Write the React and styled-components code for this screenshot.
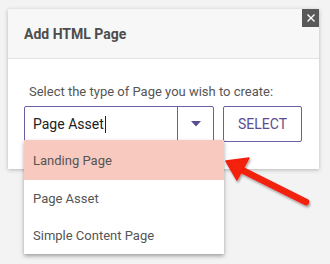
import React from "react";
import styled, { createGlobalStyle } from "styled-components";

const GlobalStyle = createGlobalStyle`
  body {
    margin: 0;
    background: #f3f3f3;
    font-family: Roboto, "Liberation Sans", sans-serif;
  }
`;

const Page = styled.div`
  position: relative;
  width: 330px;
  height: 264px;
  overflow: hidden;
  padding: 9px 0 0 8px;
  box-sizing: border-box;
`;

const Dialog = styled.div`
  position: relative;
  width: 311px;
  background: #fff;
  box-shadow: 0 1px 4px rgba(0, 0, 0, 0.25);
`;

const Header = styled.div`
  height: 49px;
  display: flex;
  align-items: center;
  padding-left: 16px;
  background: #f7f7f7;
  border-bottom: 1px solid #e3e3e3;
`;

const Title = styled.h1`
  margin: 0;
  font-size: 14px;
  font-weight: 700;
  color: #4d4d4d;
`;

const CloseButton = styled.button`
  position: absolute;
  top: 0;
  right: 0;
  width: 17px;
  height: 18px;
  padding: 0;
  border: none;
  background: #595959;
  display: flex;
  align-items: center;
  justify-content: center;
`;

const Body = styled.div`
  padding: 25px 17px 27px 16px;
`;

const Prompt = styled.p`
  margin: 0 0 6px 5px;
  font-size: 13px;
  line-height: 16px;
  color: #555;
`;

const Row = styled.div`
  display: flex;
  gap: 9px;
`;

const SelectBox = styled.div`
  position: relative;
  width: 190px;
  height: 36px;
  display: flex;
  box-sizing: border-box;
  border: 1px solid #6c5ea3;
  border-radius: 2px;
`;

const InputText = styled.div`
  flex: 1;
  display: flex;
  align-items: center;
  padding-left: 8px;
  font-size: 14px;
  color: #222;
`;

const Caret = styled.span`
  display: inline-block;
  width: 1px;
  height: 17px;
  margin-left: 1px;
  background: #222;
`;

const Toggle = styled.div`
  width: 35px;
  border-left: 1px solid #6c5ea3;
  display: flex;
  align-items: center;
  justify-content: center;
`;

const SelectButton = styled.button`
  width: 79px;
  height: 36px;
  box-sizing: border-box;
  border: 1px solid #6c5ea3;
  border-radius: 2px;
  background: #fff;
  color: #5b4d92;
  font-family: Roboto, "Liberation Sans", sans-serif;
  font-size: 14px;
  font-weight: 400;
`;

const Menu = styled.ul`
  position: absolute;
  top: 33px;
  left: -1px;
  width: 200px;
  margin: 0;
  padding: 0;
  list-style: none;
  background: #fff;
  box-shadow: 0 2px 4px rgba(0, 0, 0, 0.35);
  z-index: 2;
`;

const MenuItem = styled.li`
  height: ${({ $active }) => ($active ? "40px" : "37px")};
  display: flex;
  align-items: center;
  padding-left: 9px;
  font-size: 13px;
  color: #555;
  background: ${({ $active }) => ($active ? "#f8c9bf" : "#fff")};
`;

const Pointer = styled.svg`
  position: absolute;
  left: 220px;
  top: 150px;
  z-index: 3;
`;

const options = ["Landing Page", "Page Asset", "Simple Content Page"];

export default function App() {
  return (
    <Page>
      <GlobalStyle />
      <Dialog>
        <Header>
          <Title>Add HTML Page</Title>
        </Header>
        <CloseButton aria-label="Close">
          <svg width="10" height="10" viewBox="0 0 10 10">
            <path d="M1.5 1.5L8.5 8.5M8.5 1.5L1.5 8.5" stroke="#fff" strokeWidth="1.4" />
          </svg>
        </CloseButton>
        <Body>
          <Prompt>Select the type of Page you wish to create:</Prompt>
          <Row>
            <SelectBox>
              <InputText>
                Page Asset<Caret />
              </InputText>
              <Toggle>
                <svg width="10" height="6" viewBox="0 0 10 6">
                  <path d="M0 0H10L5 5.5Z" fill="#5b4d92" />
                </svg>
              </Toggle>
              <Menu>
                {options.map((o, i) => (
                  <MenuItem key={o} $active={i === 0}>
                    {o}
                  </MenuItem>
                ))}
              </Menu>
            </SelectBox>
            <SelectButton>SELECT</SelectButton>
          </Row>
        </Body>
      </Dialog>
      <Pointer width="100" height="62" viewBox="0 0 100 62">
        <defs>
          <filter id="sh" x="-20%" y="-20%" width="140%" height="160%">
            <feDropShadow dx="1" dy="2" stdDeviation="1.2" floodColor="#000" floodOpacity="0.35" />
          </filter>
        </defs>
        <g filter="url(#sh)">
          <path d="M86 52L22 20" stroke="#f2200f" strokeWidth="6.5" strokeLinecap="round" />
          <path d="M6 11L29 8L17 30Z" fill="#f2200f" stroke="#f2200f" strokeWidth="1.5" strokeLinejoin="round" />
        </g>
      </Pointer>
    </Page>
  );
}
